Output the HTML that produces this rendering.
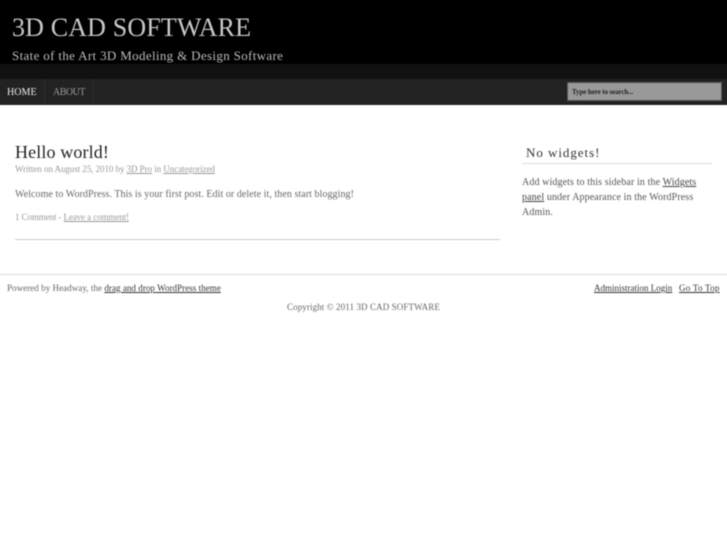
<!DOCTYPE html>
<html>
<head>
<meta charset="utf-8">
<style>
html,body{margin:0;padding:0;background:#fff;width:727px;height:545px;overflow:hidden}
body{font-family:"Liberation Serif",serif;position:relative}
.a{position:absolute;white-space:nowrap}
a{color:inherit;text-decoration:underline}
#w{position:absolute;left:0;top:0;width:727px;height:545px;filter:blur(.45px)}
</style>
</head>
<body>
<div id="w">
<div class="a" style="left:-10px;top:-10px;width:747px;height:74px;background:#000"></div>
<div class="a" style="left:-10px;top:64px;width:747px;height:15px;background:#111"></div>
<div class="a" style="left:-10px;top:79px;width:747px;height:26px;background:#222"></div>
<div class="a" style="left:44px;top:79px;width:1px;height:26px;background:#2e2e2e"></div>
<div class="a" style="left:93px;top:79px;width:1px;height:26px;background:#2e2e2e"></div>
<div class="a" style="left:12px;top:13px;font-size:26px;line-height:30px;color:#c8c8c8;letter-spacing:0.15px">3D CAD SOFTWARE</div>
<div class="a" style="left:12px;top:47px;font-size:13px;line-height:17px;color:#bbb;letter-spacing:0.34px">State of the Art 3D Modeling &amp; Design Software</div>
<div class="a" style="left:7px;top:86px;font-size:10px;line-height:14px;color:#eee;letter-spacing:0.05px">HOME</div>
<div class="a" style="left:53px;top:86px;font-size:10px;line-height:14px;color:#999;letter-spacing:-0.5px">ABOUT</div>
<div class="a" style="left:567px;top:82px;width:155px;height:19px;background:#999;border:1px solid #555;box-sizing:border-box"></div>
<div class="a" style="left:572px;top:86px;font-size:7px;line-height:12px;color:#222;font-weight:bold;letter-spacing:-0.1px">Type here to search...</div>

<div class="a" style="left:15px;top:141px;font-size:18px;line-height:22px;color:#222;letter-spacing:0.13px">Hello world!</div>
<div class="a" style="left:15px;top:163px;font-size:9px;line-height:12px;color:#999;letter-spacing:-0.06px">Written on August 25, 2010 by <a>3D Pro</a> in <a>Uncategorized</a></div>
<div class="a" style="left:15px;top:188px;font-size:10px;line-height:14px;color:#666;letter-spacing:0.06px">Welcome to WordPress. This is your first post. Edit or delete it, then start blogging!</div>
<div class="a" style="left:15px;top:211px;font-size:9px;line-height:12px;color:#999;letter-spacing:-0.1px">1 Comment - <a>Leave a comment!</a></div>
<div class="a" style="left:15px;top:239px;width:485px;height:1px;background:#ccc"></div>

<div class="a" style="left:526px;top:145px;font-size:13px;line-height:16px;color:#333;letter-spacing:0.95px">No widgets!</div>
<div class="a" style="left:522px;top:163px;width:190px;height:1px;background:#ddd"></div>
<div class="a" style="left:522px;top:175px;font-size:10px;line-height:15px;color:#555;letter-spacing:0.11px">Add widgets to this sidebar in the <a style="color:#444">Widgets</a><br><a style="color:#444">panel</a> under Appearance in the WordPress<br>Admin.</div>

<div class="a" style="left:-10px;top:274px;width:747px;height:1px;background:#ddd"></div>
<div class="a" style="left:7px;top:282px;font-size:9px;line-height:12px;color:#666;letter-spacing:0.05px">Powered by Headway, the <a style="color:#333">drag and drop WordPress theme</a></div>
<div class="a" style="left:594px;top:282px;font-size:9px;line-height:12px;color:#333"><a>Administration Login</a></div>
<div class="a" style="left:679px;top:282px;font-size:9px;line-height:12px;color:#333;letter-spacing:0.25px"><a>Go To Top</a></div>
<div class="a" style="left:287px;top:301px;font-size:9px;line-height:12px;color:#666;letter-spacing:0.1px">Copyright © 2011 3D CAD SOFTWARE</div>
</div>
</body>
</html>
